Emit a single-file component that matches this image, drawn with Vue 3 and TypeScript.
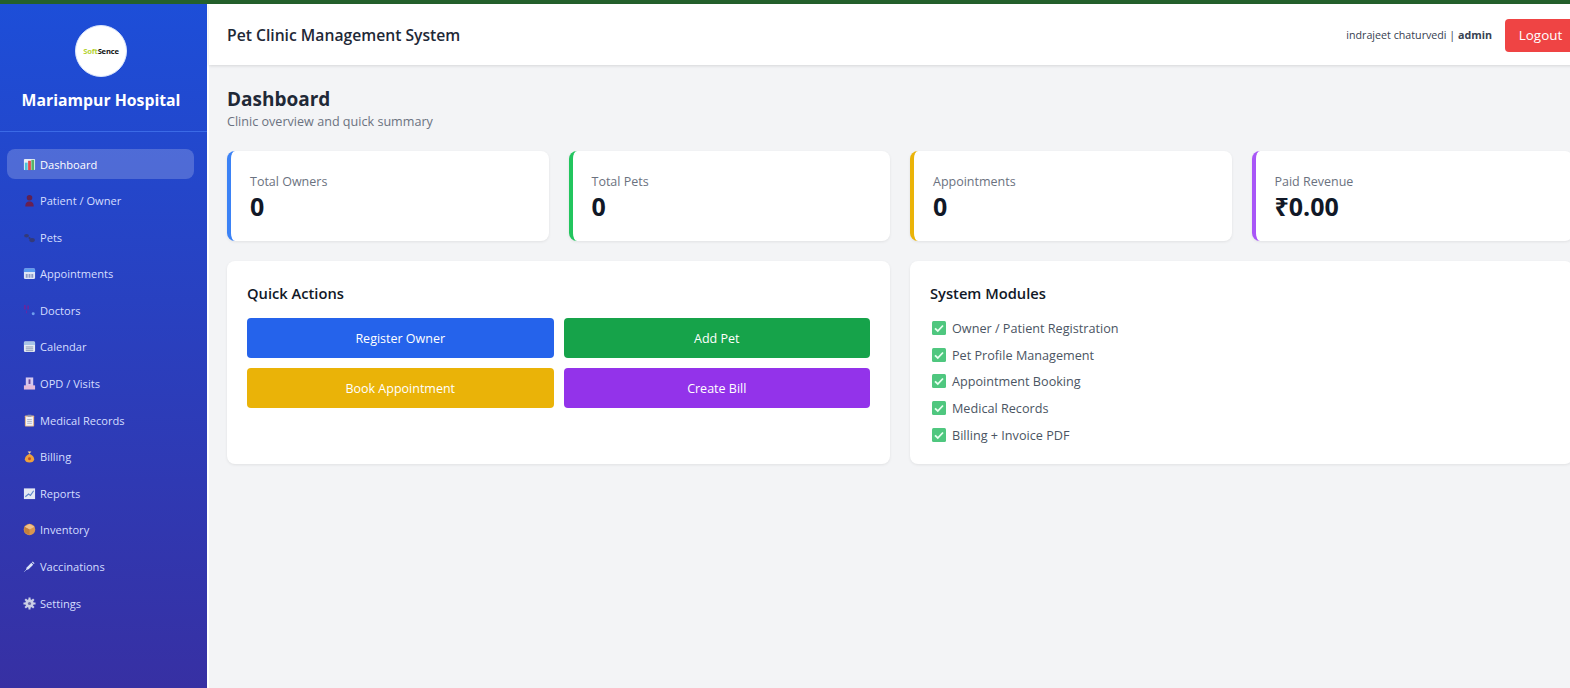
<script setup lang="ts">
const navItems = [
  { label: 'Dashboard', icon: 'chart', active: true },
  { label: 'Patient / Owner', icon: 'person' },
  { label: 'Pets', icon: 'paw' },
  { label: 'Appointments', icon: 'date' },
  { label: 'Doctors', icon: 'steth' },
  { label: 'Calendar', icon: 'calendar' },
  { label: 'OPD / Visits', icon: 'hospital' },
  { label: 'Medical Records', icon: 'clipboard' },
  { label: 'Billing', icon: 'money' },
  { label: 'Reports', icon: 'trend' },
  { label: 'Inventory', icon: 'box' },
  { label: 'Vaccinations', icon: 'syringe' },
  { label: 'Settings', icon: 'gear' },
]

const stats = [
  { label: 'Total Owners', value: '0', color: '#3b82f6' },
  { label: 'Total Pets', value: '0', color: '#22c55e' },
  { label: 'Appointments', value: '0', color: '#eab308' },
  { label: 'Paid Revenue', value: '₹0.00', color: '#a855f7' },
]

const actions = [
  { label: 'Register Owner', color: '#2563eb' },
  { label: 'Add Pet', color: '#16a34a' },
  { label: 'Book Appointment', color: '#eab308' },
  { label: 'Create Bill', color: '#9333ea' },
]

const modules = [
  'Owner / Patient Registration',
  'Pet Profile Management',
  'Appointment Booking',
  'Medical Records',
  'Billing + Invoice PDF',
]
</script>

<template>
  <div class="page">
    <div class="topline"></div>
    <div class="shell">
      <aside class="sidebar">
        <div class="brand">
          <div class="logo"><span class="soft">Soft</span><span class="sence">Sence</span></div>
          <div class="hospital">Mariampur Hospital</div>
        </div>
        <nav class="nav">
          <a v-for="item in navItems" :key="item.label" class="nav-item" :class="{ active: item.active }">
            <svg class="nav-icon" viewBox="0 0 14 14">
              <template v-if="item.icon === 'chart'">
                <rect x="1" y="1" width="12" height="12" rx="1" fill="#e8eef7" />
                <rect x="2" y="5" width="3" height="8" fill="#4fc3d9" />
                <rect x="5.5" y="3" width="3" height="10" fill="#e5484d" />
                <rect x="9" y="2" width="3" height="11" fill="#58b368" />
              </template>
              <template v-else-if="item.icon === 'person'">
                <circle cx="7" cy="4" r="3" fill="#5f2052" />
                <path d="M2.500 13.500c0-4 1.500-5.500 4.500-5.500s4.500 1.500 4.500 5.500z" fill="#6a2050" />
              </template>
              <template v-else-if="item.icon === 'paw'">
                <ellipse cx="3.800" cy="5.200" rx="2.600" ry="1.900" fill="#343a78" />
                <ellipse cx="9.800" cy="9.800" rx="3" ry="2.200" fill="#343a78" />
                <circle cx="7" cy="7.500" r="1.100" fill="#343a78" />
              </template>
              <template v-else-if="item.icon === 'date'">
                <rect x="1" y="1.500" width="12" height="11.500" rx="1.500" fill="#dfe6f5" />
                <path d="M1 3A1.500 1.500 0 0 1 2.500 1.500h9A1.500 1.500 0 0 1 13 3V5.500H1z" fill="#5b9bf0" />
                <path d="M3 7.500h2v4H3zM6 7.500h2v4H6zM9 7.500h2v4H9z" fill="#8e9bc5" />
              </template>
              <template v-else-if="item.icon === 'steth'">
                <path d="M2 1v5M5.500 1.500v4.500" stroke="#7a1f96" stroke-width="1.400" fill="none" />
                <path d="M3.800 7v3" stroke="#5f2aa8" stroke-width="1.200" fill="none" />
                <circle cx="11" cy="10.500" r="1.600" fill="#6f9fee" />
              </template>
              <template v-else-if="item.icon === 'calendar'">
                <rect x="1" y="1.500" width="12" height="11.500" rx="1.500" fill="#e6ebf2" />
                <path d="M1 3A1.500 1.500 0 0 1 2.500 1.500h9A1.500 1.500 0 0 1 13 3V5.500H1z" fill="#a8c4e6" />
                <path d="M3 7.500h8M3 9.500h8M3 11.500h8" stroke="#7d8aa8" stroke-width="0.900" />
              </template>
              <template v-else-if="item.icon === 'hospital'">
                <rect x="3" y="0.500" width="8" height="11" fill="#d6c8ee" />
                <rect x="1" y="9" width="12" height="4.500" fill="#e6bcd9" />
                <path d="M6 2.500h2v5H6z" fill="#6d4a9c" />
              </template>
              <template v-else-if="item.icon === 'clipboard'">
                <rect x="2" y="1.500" width="10" height="12" rx="1" fill="#e5b98c" />
                <rect x="3.200" y="3" width="7.600" height="9.500" fill="#f2f2f7" />
                <rect x="5" y="0.800" width="4" height="2.200" fill="#8f95ad" />
                <path d="M4.500 6h5M4.500 8h5M4.500 10h5" stroke="#9aa0bb" stroke-width="0.800" />
              </template>
              <template v-else-if="item.icon === 'money'">
                <path d="M7 4C3.500 5.500 2 8 2 10c0 2.200 2 3.500 5 3.500s5-1.300 5-3.500c0-2-1.500-4.500-5-6z" fill="#eea13c" />
                <path d="M5 1.500l2 2.500 2-2.500z" fill="#f4d6a0" />
                <circle cx="7" cy="9.500" r="1.600" fill="#c7501f" />
              </template>
              <template v-else-if="item.icon === 'trend'">
                <rect x="1" y="1.500" width="12" height="11.500" fill="#e5e9f3" />
                <path d="M2.500 10.500L6 7.500l2 1.500 3.500-5" stroke="#5f86c8" stroke-width="1.200" fill="none" />
              </template>
              <template v-else-if="item.icon === 'box'">
                <circle cx="7" cy="7" r="6.200" fill="#d9964f" />
                <path d="M7 1l5.500 3L7 7 1.500 4z" fill="#efc08a" />
                <path d="M7 7v6L1.500 10V4z" fill="#c27f3d" />
              </template>
              <template v-else-if="item.icon === 'syringe'">
                <path d="M4 8l5-5 2 2-5 5-3 1z" fill="#dbe4f7" />
                <path d="M10 2l2 2" stroke="#dbe4f7" stroke-width="1.200" />
                <path d="M3 11l-1.500 1.500" stroke="#aebde8" stroke-width="1" />
              </template>
              <template v-else-if="item.icon === 'gear'">
                <path d="M7 0.500v13M0.500 7h13M2.400 2.400l9.200 9.200M2.400 11.600l9.200-9.200" stroke="#ccd0e6" stroke-width="2.200" />
                <circle cx="7" cy="7" r="4.500" fill="#ccd0e6" />
                <circle cx="7" cy="7" r="1.700" fill="#6a68a8" />
              </template>
            </svg>
            <span>{{ item.label }}</span>
          </a>
        </nav>
      </aside>

      <main class="main">
        <header class="topbar">
          <div class="system-name">Pet Clinic Management System</div>
          <div class="user-box">
            <span class="user">indrajeet chaturvedi | <b>admin</b></span>
            <button class="logout">Logout</button>
          </div>
        </header>

        <section class="content">
          <h1 class="title">Dashboard</h1>
          <p class="subtitle">Clinic overview and quick summary</p>

          <div class="stats">
            <div v-for="s in stats" :key="s.label" class="stat" :style="{ borderLeftColor: s.color }">
              <div class="stat-label">{{ s.label }}</div>
              <div class="stat-value">{{ s.value }}</div>
            </div>
          </div>

          <div class="panels">
            <div class="panel">
              <h3>Quick Actions</h3>
              <div class="actions">
                <button v-for="a in actions" :key="a.label" class="action" :style="{ background: a.color }">{{ a.label }}</button>
              </div>
            </div>
            <div class="panel">
              <h3>System Modules</h3>
              <ul class="modules">
                <li v-for="m in modules" :key="m">
                  <svg class="check" viewBox="0 0 14 14">
                    <rect width="14" height="14" rx="1.500" fill="#4fc77f" />
                    <path d="M3 7.300l2.800 2.700L11 4.500" stroke="#e8fff0" stroke-width="1.800" fill="none" />
                  </svg>
                  {{ m }}
                </li>
              </ul>
            </div>
          </div>
        </section>
      </main>
    </div>
  </div>
</template>

<style>
html, body {
  margin: 0;
  overflow: hidden;
}
</style>

<style scoped>
.page {
  width: 1570px;
  height: 688px;
  overflow: hidden;
  display: flex;
  flex-direction: column;
  background: #f3f4f6;
  font-family: "Open Sans", "Noto Sans", sans-serif;
}
.topline {
  height: 4px;
  flex: none;
  background: #24602c;
}
.shell {
  flex: 1;
  display: flex;
  min-height: 0;
}
.sidebar {
  width: 207px;
  flex: none;
  background: linear-gradient(180deg, #1d4ed8 0%, #3730a3 100%);
  color: #fff;
}
.brand {
  height: 128px;
  box-sizing: border-box;
  padding: 21px 5px 0 0;
  display: flex;
  flex-direction: column;
  align-items: center;
  border-bottom: 1px solid #3b6ae6;
}
.logo {
  width: 52px;
  height: 52px;
  border-radius: 50%;
  background: #fff;
  box-sizing: border-box;
  border: 1px solid #dbe6fb;
  display: flex;
  align-items: center;
  justify-content: center;
  font-size: 7.600px;
  font-weight: 700;
  letter-spacing: -0.2px;
}
.soft {
  color: #b5d334;
}
.sence {
  color: #111;
}
.hospital {
  margin-top: 11px;
  font-size: 15.800px;
  font-weight: 700;
  line-height: 24px;
}
.nav {
  display: flex;
  flex-direction: column;
  padding: 17px 13px 0 7px;
  gap: 6.600px;
}
.nav-item {
  height: 30px;
  box-sizing: border-box;
  display: flex;
  align-items: center;
  gap: 4px;
  padding-left: 16px;
  border-radius: 8px;
  font-size: 11.100px;
  color: #d5deff;
}
.nav-item.active {
  background: rgba(255, 255, 255, 0.2);
  color: #fff;
}
.nav-icon {
  width: 13px;
  height: 13px;
  flex: none;
}
.main {
  width: 1369px;
  flex: none;
  border-left: 2px solid #fff;
  box-sizing: border-box;
}
.topbar {
  height: 61px;
  box-sizing: border-box;
  background: #fff;
  box-shadow: 0 1px 3px rgba(0, 0, 0, 0.12);
  display: flex;
  align-items: center;
  justify-content: space-between;
  padding: 1px 0 0 18px;
}
.system-name {
  font-size: 15.700px;
  font-weight: 600;
  color: #1f2937;
}
.user-box {
  display: flex;
  align-items: center;
  gap: 13px;
}
.user {
  font-size: 10.700px;
  color: #374151;
}
.logout {
  width: 71px;
  height: 33px;
  border: none;
  border-radius: 4px;
  background: #ef4444;
  color: #fff;
  font: inherit;
  font-size: 13.400px;
}
.content {
  padding: 22px 3px 0 18px;
}
.title {
  margin: 0;
  font-size: 19px;
  line-height: 24px;
  font-weight: 700;
  color: #1f2937;
}
.subtitle {
  margin: 0;
  font-size: 12.600px;
  line-height: 22px;
  color: #6b7280;
}
.stats {
  display: grid;
  grid-template-columns: repeat(4, 1fr);
  gap: 20px;
  margin-top: 18px;
}
.stat {
  height: 90px;
  box-sizing: border-box;
  background: #fff;
  border-left: 4px solid;
  border-radius: 8px;
  padding: 22px 0 0 19px;
  box-shadow: 0 1px 3px rgba(0, 0, 0, 0.08);
}
.stat-label {
  font-size: 12.500px;
  line-height: 18px;
  color: #6b7280;
}
.stat-value {
  font-size: 25px;
  line-height: 30px;
  font-weight: 700;
  color: #111827;
}
.panels {
  display: grid;
  grid-template-columns: 1fr 1fr;
  gap: 20px;
  margin-top: 20px;
}
.panel {
  height: 203px;
  box-sizing: border-box;
  background: #fff;
  border-radius: 8px;
  padding: 22px 20px;
  box-shadow: 0 1px 3px rgba(0, 0, 0, 0.08);
}
.panel h3 {
  margin: 0 0 15px;
  font-size: 14.700px;
  line-height: 20px;
  font-weight: 600;
  color: #111827;
}
.actions {
  display: grid;
  grid-template-columns: 1fr 1fr;
  gap: 10px;
}
.action {
  height: 40px;
  border: none;
  border-radius: 4px;
  color: #fff;
  font: inherit;
  font-size: 12.500px;
}
.modules {
  margin: -3px 0 0;
  padding: 0;
  list-style: none;
  font-size: 12.650px;
  color: #4b5563;
}
.modules li {
  height: 26.600px;
  display: flex;
  align-items: center;
  gap: 6px;
  padding-left: 2px;
}
.check {
  width: 14px;
  height: 14px;
  flex: none;
}
</style>
